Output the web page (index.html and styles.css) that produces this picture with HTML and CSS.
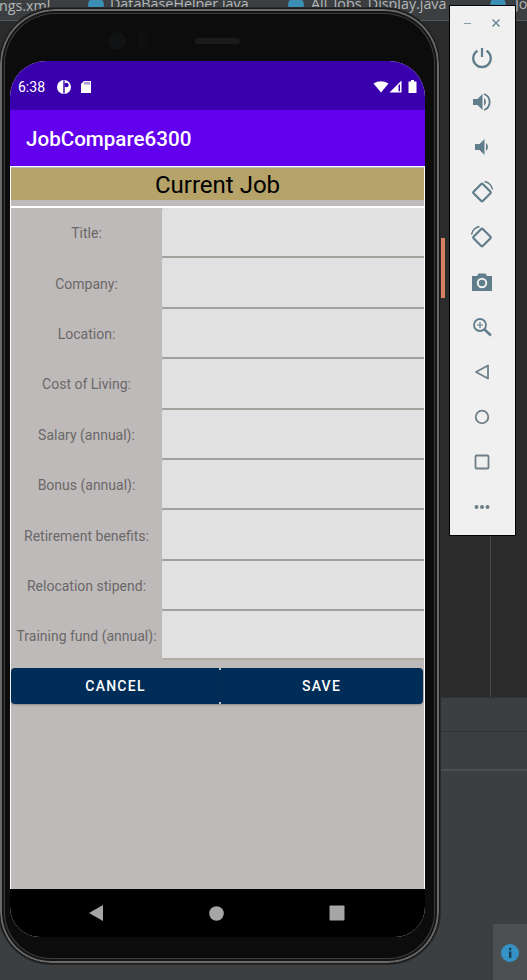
FILE: index.html
```html
<!DOCTYPE html>
<html lang="en">

<head>
    <meta charset="UTF-8">
    <meta name="viewport" content="width=device-width, initial-scale=1.0">
    <title>JobCompare6300</title>
    <link rel="stylesheet" href="styles.css">
</head>

<body>
    <!-- ide behind the emulator -->
    <div class="ide">
        <div class="tabs">
            <span class="tab tab-1">ngs.xml</span>
            <span class="tab-icon icon-1"></span>
            <span class="tab tab-2">DataBaseHelper.java</span>
            <span class="tab-icon icon-2"></span>
            <span class="tab tab-3">All_Jobs_Display.java</span>
            <span class="tab-icon icon-3"></span>
            <span class="tab tab-4">Jo</span>
        </div>
        <div class="editor">
            <div class="editor-line"></div>
            <div class="marker"></div>
        </div>
        <div class="panel panel-a"></div>
        <div class="panel panel-b"></div>
        <div class="panel panel-c">
            <div class="event-log">
                <svg width="22" height="22" viewBox="0 0 22 22">
                    <circle cx="11" cy="11" r="9" fill="#3592c4" />
                    <rect x="10" y="9.5" width="2.4" height="6.5" fill="#1d3f55" />
                    <rect x="10" y="5.8" width="2.4" height="2.4" fill="#1d3f55" />
                </svg>
            </div>
        </div>
    </div>

    <!-- phone -->
    <div class="phone">
        <div class="bezel-top">
            <div class="camera"></div>
            <div class="sensor"></div>
            <div class="speaker"></div>
        </div>
        <div class="screen">
            <div class="status-bar">
                <span class="clock">6:38</span>
                <svg class="status-icon" width="16" height="16" viewBox="0 0 16 16">
                    <circle cx="8" cy="8" r="7" fill="#fff" />
                    <path d="M8 1.5 V14.500" stroke="#3a00ae" stroke-width="1.400" />
                    <circle cx="10.500" cy="6" r="2.200" fill="#3a00ae" />
                </svg>
                <svg class="status-icon" width="12" height="14" viewBox="0 0 12 14">
                    <path d="M4 1 H11 V13 H1 V4 Z" fill="#fff" />
                    <path d="M5 2 V4.500 M7 2 V4.500 M9 2 V4.500" stroke="#3a00ae" stroke-width="0.800" />
                </svg>
                <span class="status-right">
                    <svg width="16" height="12" viewBox="0 0 16 12">
                        <path d="M0.500 2.500 Q8 -2 15.500 2.500 L8 11.500 Z" fill="#fff" />
                    </svg>
                    <svg width="13" height="13" viewBox="0 0 13 13">
                        <path d="M12.500 0.500 V12.500 H0.500 Z" fill="#fff" />
                        <path d="M11 4 V11.300 H9.500 V5.500 Z" fill="#3a00ae" />
                    </svg>
                    <svg class="battery" width="9" height="13" viewBox="0 0 9 13">
                        <path d="M3 0 H6 V1.500 H8.500 V13 H0.500 V1.500 H3 Z" fill="#fff" />
                    </svg>
                </span>
            </div>
            <div class="app-bar">JobCompare6300</div>
            <div class="content">
                <div class="heading-wrap">
                    <h1 class="heading">Current Job</h1>
                </div>
                <div class="form">
                    <div class="row"><label class="label">Title:</label><div class="input"></div></div>
                    <div class="row"><label class="label">Company:</label><div class="input"></div></div>
                    <div class="row"><label class="label">Location:</label><div class="input"></div></div>
                    <div class="row"><label class="label">Cost of Living:</label><div class="input"></div></div>
                    <div class="row"><label class="label">Salary (annual):</label><div class="input"></div></div>
                    <div class="row"><label class="label">Bonus (annual):</label><div class="input"></div></div>
                    <div class="row"><label class="label">Retirement benefits:</label><div class="input"></div></div>
                    <div class="row"><label class="label">Relocation stipend:</label><div class="input"></div></div>
                    <div class="row"><label class="label">Training fund (annual):</label><div class="input"></div></div>
                </div>
                <div class="buttons">
                    <button class="btn">CANCEL</button>
                    <button class="btn">SAVE</button>
                </div>
            </div>
            <div class="nav-bar">
                <svg width="16" height="18" viewBox="0 0 16 18"><path d="M15 1 V17 L1 9 Z" fill="#a6a6a6" /></svg>
                <svg width="15" height="15" viewBox="0 0 15 15"><circle cx="7.500" cy="7.500" r="7.300" fill="#a6a6a6" /></svg>
                <svg width="16" height="16" viewBox="0 0 16 16"><rect x="0.500" y="0.500" width="15" height="15" rx="1" fill="#a6a6a6" /></svg>
            </div>
        </div>
    </div>

    <!-- emulator side toolbar -->
    <div class="toolbar">
        <div class="window-btns">
            <span class="win-min"></span>
            <svg width="10" height="10" viewBox="0 0 10 10"><path d="M1.500 1.500 L8.500 8.500 M8.500 1.500 L1.500 8.500" stroke="#607d8b" stroke-width="1.300" /></svg>
        </div>
        <div class="tool">
            <svg width="24" height="24" viewBox="0 0 24 24"><path d="M12 3 V12" stroke="#607d8b" stroke-width="2.200" fill="none" /><path d="M7.500 5.800 A8.800 8.800 0 1 0 16.500 5.800" stroke="#607d8b" stroke-width="2.200" fill="none" /></svg>
        </div>
        <div class="tool">
            <svg width="24" height="24" viewBox="0 0 24 24"><path d="M3 9 H7.500 L12.500 4 V20 L7.500 15 H3 Z" fill="#607d8b" /><path d="M14 8 A5 5 0 0 1 14 16 Z" fill="#607d8b" /><path d="M14 4 A8.500 8.500 0 0 1 14 20" stroke="#607d8b" stroke-width="1.800" fill="none" /></svg>
        </div>
        <div class="tool">
            <svg width="24" height="24" viewBox="0 0 24 24"><path d="M5 9 H9.500 L14.500 4 V20 L9.500 15 H5 Z" fill="#607d8b" /><path d="M16 8 A5 5 0 0 1 16 16 Z" fill="#607d8b" /></svg>
        </div>
        <div class="tool">
            <svg width="24" height="24" viewBox="0 0 24 24"><rect x="5.500" y="6" width="13" height="13" rx="1" transform="rotate(45 12 12.500)" fill="none" stroke="#607d8b" stroke-width="2.200" /><path d="M14.500 1.500 A10.500 10.500 0 0 1 22.500 9.500" stroke="#607d8b" stroke-width="1.400" fill="none" /></svg>
        </div>
        <div class="tool">
            <svg width="24" height="24" viewBox="0 0 24 24"><rect x="5.500" y="6" width="13" height="13" rx="1" transform="rotate(45 12 12.500)" fill="none" stroke="#607d8b" stroke-width="2.200" /><path d="M9.500 1.500 A10.500 10.500 0 0 0 1.500 9.500" stroke="#607d8b" stroke-width="1.400" fill="none" /></svg>
        </div>
        <div class="tool">
            <svg width="24" height="24" viewBox="0 0 24 24"><path d="M8.500 3.500 H15.500 L17 6 H22 V21 H2 V6 H7 Z" fill="#607d8b" /><circle cx="12" cy="13" r="4.200" fill="none" stroke="#f0f0f0" stroke-width="2" /></svg>
        </div>
        <div class="tool">
            <svg width="24" height="24" viewBox="0 0 24 24"><circle cx="10" cy="10" r="6" fill="none" stroke="#607d8b" stroke-width="1.800" /><path d="M14.500 14.500 L21 20.500" stroke="#607d8b" stroke-width="2.400" /><path d="M10 7 V13 M7 10 H13" stroke="#607d8b" stroke-width="1.200" /></svg>
        </div>
        <div class="tool">
            <svg width="24" height="24" viewBox="0 0 24 24"><path d="M18 5.500 V18.500 L6 12 Z" fill="none" stroke="#6e7f88" stroke-width="1.800" stroke-linejoin="round" /></svg>
        </div>
        <div class="tool">
            <svg width="24" height="24" viewBox="0 0 24 24"><circle cx="12" cy="12" r="6.300" fill="none" stroke="#6e7f88" stroke-width="1.800" /></svg>
        </div>
        <div class="tool">
            <svg width="24" height="24" viewBox="0 0 24 24"><rect x="5.500" y="5.500" width="13" height="13" rx="1" fill="none" stroke="#6e7f88" stroke-width="1.800" /></svg>
        </div>
        <div class="tool">
            <svg width="24" height="24" viewBox="0 0 24 24"><circle cx="6.500" cy="12" r="2" fill="#6e7f88" /><circle cx="12" cy="12" r="2" fill="#6e7f88" /><circle cx="17.500" cy="12" r="2" fill="#6e7f88" /></svg>
        </div>
    </div>
</body>

</html>
```

FILE: styles.css
```css
html,
body {
    margin: 0;
    padding: 0;
    width: 527px;
    height: 980px;
    overflow: hidden;
    background: #3c3f41;
    font-family: Roboto, "Liberation Sans", sans-serif;
}

/* ide behind */
.ide {
    position: absolute;
    left: 0;
    top: 0;
    width: 527px;
    height: 980px;
}

.tabs {
    position: relative;
    height: 20px;
    background: #3c3f41;
    border-bottom: 1px solid #55585a;
    font-family: "Open Sans", "Liberation Sans", sans-serif;
    font-size: 14.300px;
    color: #b4b8ba;
    overflow: hidden;
}

.tab {
    position: absolute;
    top: -6px;
    white-space: nowrap;
}

.tab-1 { left: -1px; top: -4px; }
.tab-2 { left: 110px; }
.tab-3 { left: 311px; }
.tab-4 { left: 515px; }

.tab-icon {
    position: absolute;
    top: -3px;
    width: 16px;
    height: 16px;
    border-radius: 50%;
    background: #3b8fb5;
}

.icon-1 { left: 88px; }
.icon-2 { left: 288px; }
.icon-3 { left: 490px; }

.editor {
    position: relative;
    height: 676px;
    background: #2b2b2b;
}

.editor-line {
    position: absolute;
    left: 490px;
    top: 514px;
    bottom: 0;
    width: 1px;
    background: #4a4a4a;
}

.marker {
    position: absolute;
    left: 440px;
    top: 217px;
    width: 5px;
    height: 60px;
    background: #d9805f;
}

.panel {
    border-top: 1px solid #323232;
}

.panel-a { height: 33px; background: #3c3f41; }
.panel-b { height: 37px; background: #3c3f41; }

.panel-c {
    position: relative;
    height: 211px;
    background: #3c3f41;
    border-top: 2px solid #4c4f51;
}

.event-log {
    position: absolute;
    right: 0;
    bottom: 0;
    width: 34px;
    height: 58px;
    background: #4c5052;
    display: flex;
    align-items: center;
    justify-content: center;
}

/* phone */
.phone {
    position: absolute;
    left: -1px;
    top: 8px;
    width: 441px;
    height: 956px;
    box-sizing: border-box;
    padding: 0 14px 0 10px;
    background: #0c0c0c;
    border-radius: 56px 56px 52px 52px;
    border: 1px solid #1a1a1a;
    box-shadow: inset 0 0 0 2px #6a6a6a, inset 0 0 0 4px #161616, inset 0 0 0 5px #3d3d3d, 0 0 0 1px #2a2a2a;
}

.bezel-top {
    position: relative;
    height: 52px;
}

.camera {
    position: absolute;
    left: 98px;
    top: 23px;
    width: 18px;
    height: 18px;
    border-radius: 50%;
    background: #111213;
}

.sensor {
    position: absolute;
    left: 128px;
    top: 22px;
    width: 10px;
    height: 19px;
    border-radius: 5px;
    background: #0f0f0f;
}

.speaker {
    position: absolute;
    left: 185px;
    top: 29px;
    width: 45px;
    height: 6px;
    border-radius: 3px;
    background: #1b1b1b;
}

.screen {
    width: 415px;
    height: 876px;
    display: flex;
    flex-direction: column;
    border-radius: 36px 36px 30px 30px;
    overflow: hidden;
    background: #fff;
}

.status-bar {
    height: 49px;
    flex-shrink: 0;
    background: #3a00ae;
    display: flex;
    align-items: center;
    padding: 2px 8px 0 8px;
    box-sizing: border-box;
    color: #fff;
    font-size: 14px;
    gap: 5px;
}

.clock {
    margin-right: 6px;
}

.status-icon {
    margin-right: 3px;
}

.status-right {
    margin-left: auto;
    display: flex;
    align-items: center;
}

.battery {
    margin-left: 6px;
}

.app-bar {
    height: 56px;
    flex-shrink: 0;
    background: #6200ee;
    color: #fff;
    font-size: 20.600px;
    font-weight: 500;
    line-height: 58px;
    padding-left: 16px;
}

.content {
    flex: 1;
    padding: 1px 1px 0 1px;
    background: #fff;
    display: flex;
    flex-direction: column;
}

.heading-wrap {
    height: 39px;
    padding-top: 1px;
    box-sizing: border-box;
    background: #bfbaba;
}

.heading {
    margin: 0;
    height: 32px;
    background: #b5a369;
    color: #000;
    font-size: 24px;
    font-weight: 400;
    line-height: 34px;
    text-align: center;
}

.form {
    margin-top: 2px;
    background: #bfbaba;
}

.row {
    display: flex;
    height: 50.400px;
}

.label {
    width: 151px;
    flex-shrink: 0;
    display: flex;
    align-items: center;
    justify-content: center;
    box-sizing: border-box;
    white-space: nowrap;
    color: #6a6868;
    font-size: 14px;
}

.input {
    flex: 1;
    background: #e1e1e1;
    border-bottom: 2px solid #a3a19c;
    border-radius: 2px 0 0 2px;
    box-sizing: border-box;
}

.row:last-child .input {
    height: 49px;
    border-bottom-color: #b3ada3;
}

.buttons {
    flex: 1;
    display: flex;
    align-items: flex-start;
    padding: 6px 1px 0 0;
    background: #bfbaba;
}

.btn {
    height: 36px;
    margin: 0;
    border: 0;
    background: #002d58;
    color: #fff;
    font-family: Roboto, "Liberation Sans", sans-serif;
    font-size: 14px;
    font-weight: 500;
    letter-spacing: 1.250px;
    box-shadow: 0 1px 2px rgba(0, 0, 0, 0.25);
}

.btn:first-child {
    flex: 0 0 209px;
    border-radius: 4px 0 0 4px;
}

.btn:last-child {
    flex: 1;
    position: relative;
    border-radius: 0 4px 4px 0;
}

/* little seams where the two buttons meet */
.btn:last-child::before,
.btn:last-child::after {
    content: "";
    position: absolute;
    left: -1px;
    width: 2px;
    height: 2px;
    background: #b8c2cc;
}

.btn:last-child::before { top: 0; }
.btn:last-child::after { bottom: 0; }

.nav-bar {
    height: 48px;
    flex-shrink: 0;
    box-sizing: border-box;
    padding: 0 80px 0 78px;
    background: #000;
    display: flex;
    align-items: center;
    justify-content: space-between;
}

/* emulator toolbar */
.toolbar {
    position: absolute;
    left: 449px;
    top: 5px;
    width: 65px;
    height: 529px;
    background: #f0f0f0;
    border: 1px solid #000;
    display: flex;
    flex-direction: column;
    align-items: center;
}

.window-btns {
    width: 100%;
    height: 28px;
    padding-top: 6px;
    box-sizing: border-box;
    flex-shrink: 0;
    display: flex;
    align-items: center;
    justify-content: center;
    gap: 20px;
}

.win-min {
    width: 7px;
    height: 1px;
    background: #8a9ba5;
}

.tool {
    height: 45px;
    width: 100%;
    padding-right: 1px;
    box-sizing: border-box;
    flex-shrink: 0;
    display: flex;
    align-items: center;
    justify-content: center;
}
```
